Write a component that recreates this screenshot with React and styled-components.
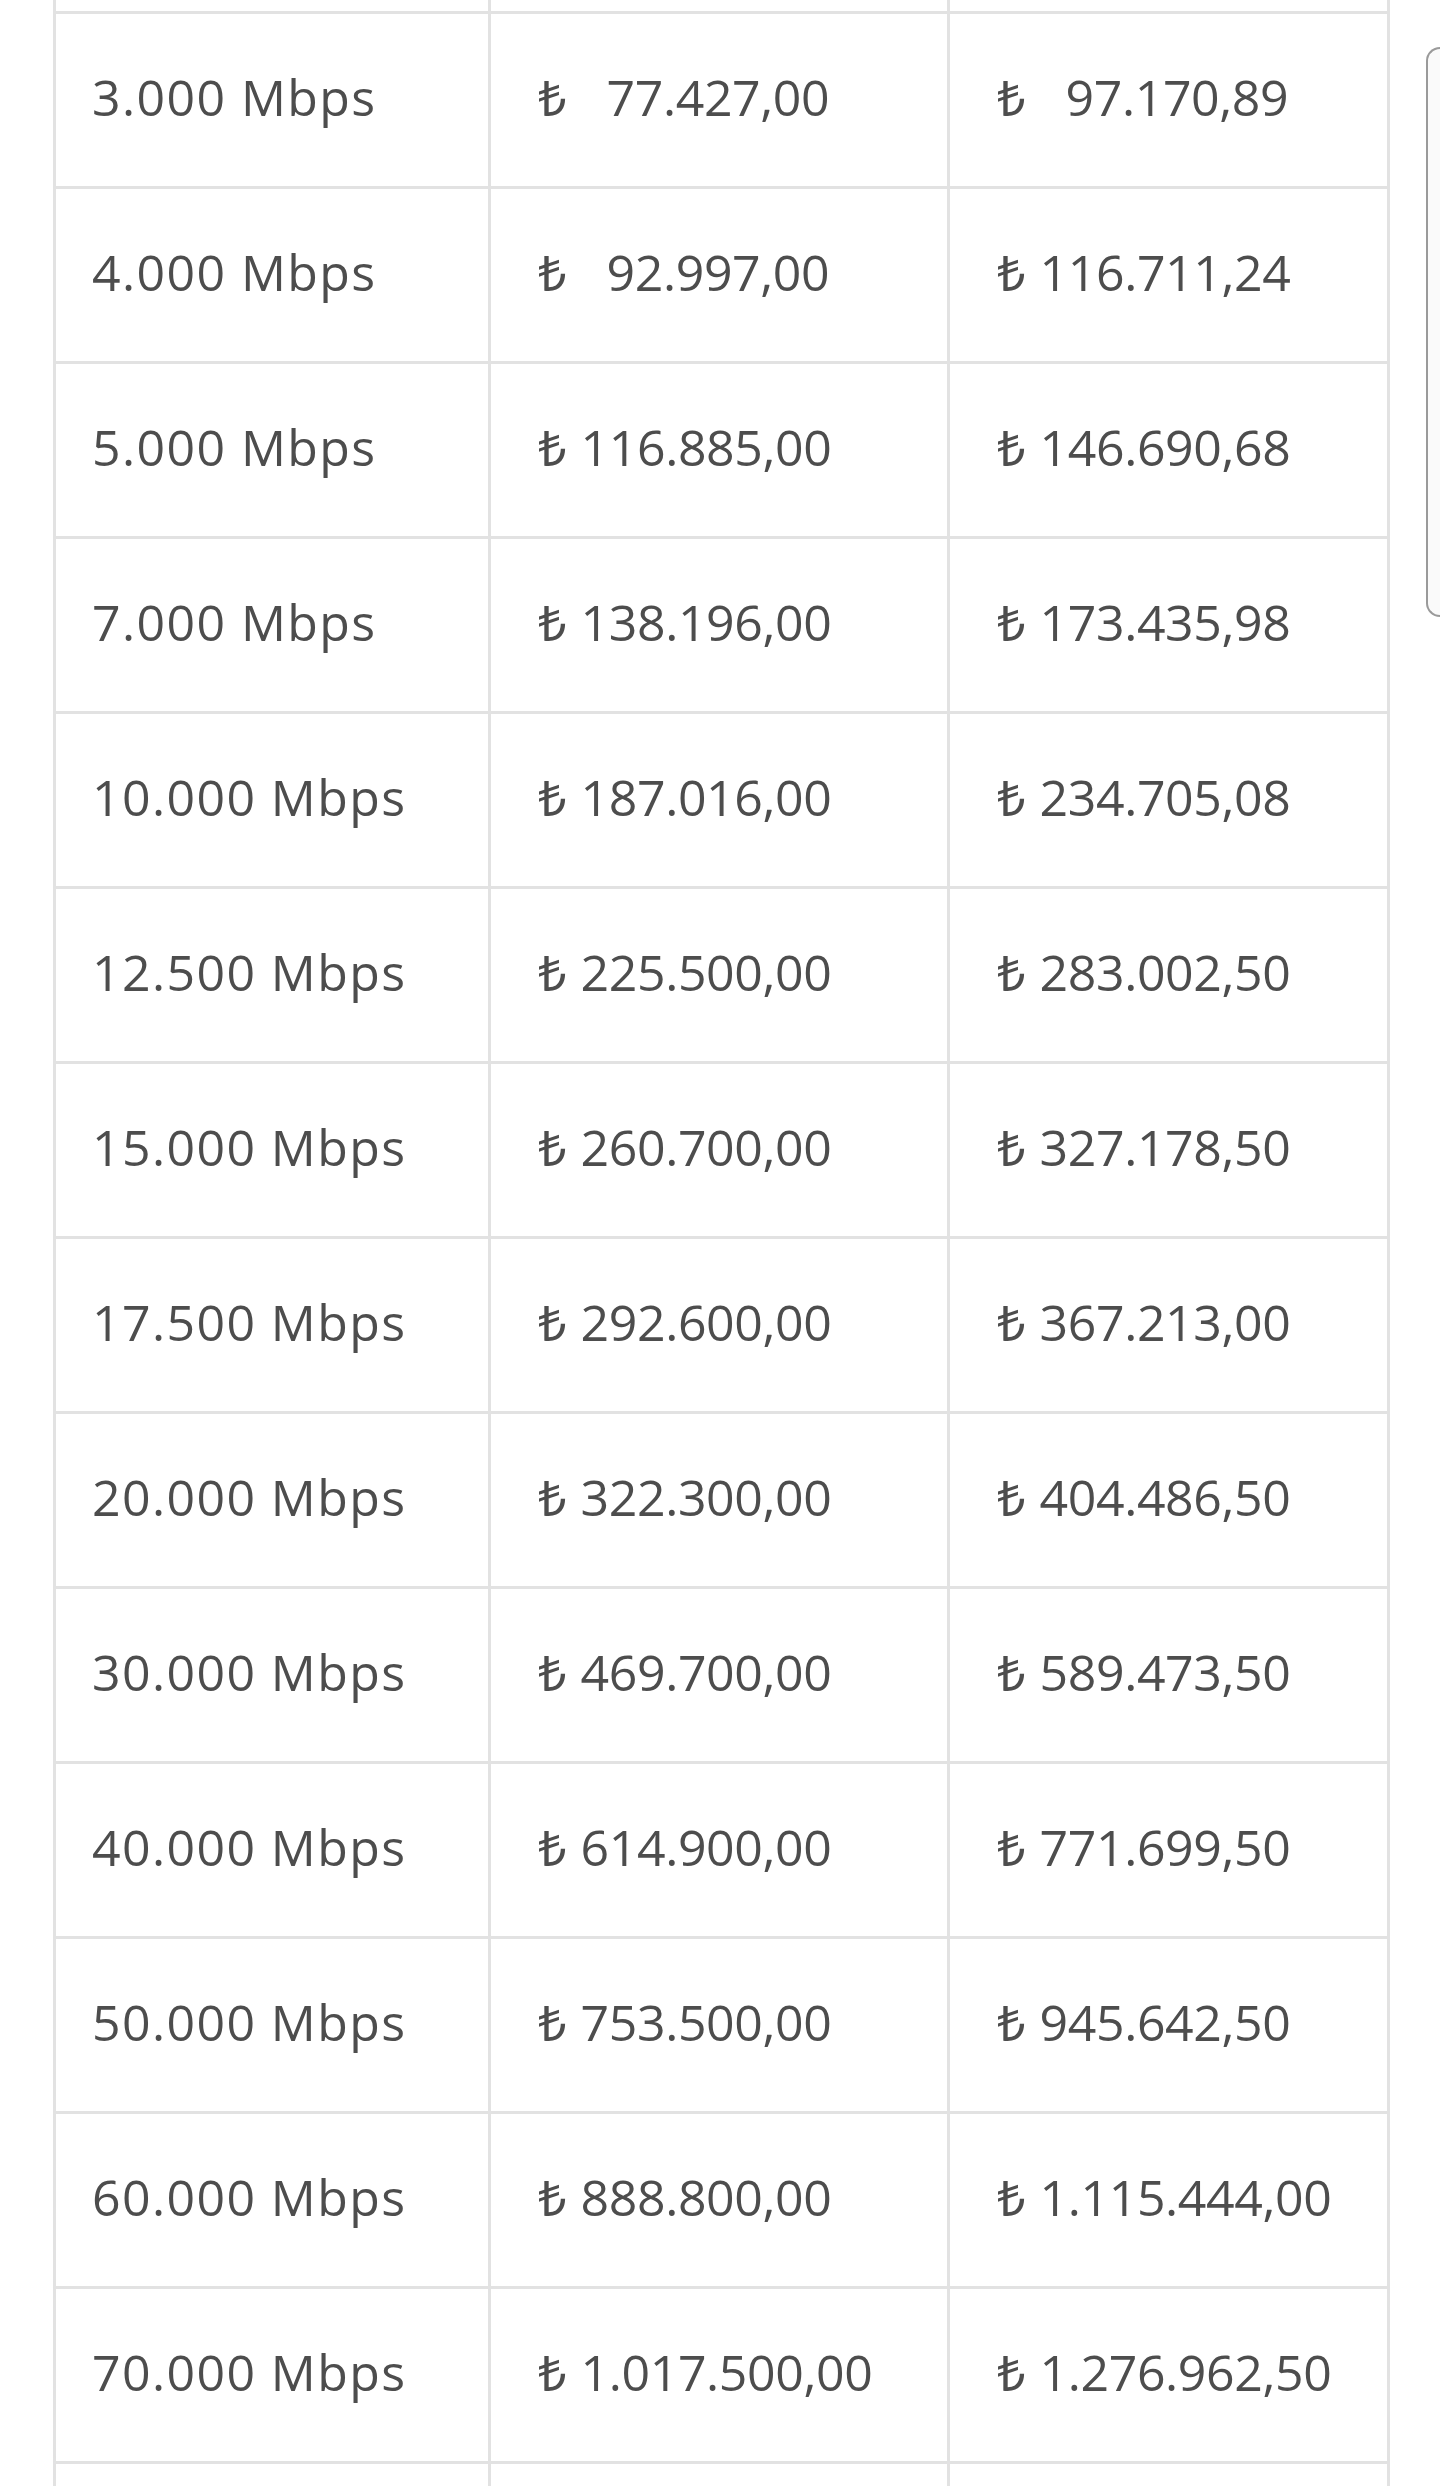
import React from "react";
import styled, { createGlobalStyle } from "styled-components";

const Global = createGlobalStyle`
  html, body { margin: 0; padding: 0; background: #fff; }
  body { overflow: hidden; }
  #root { width: 1440px; height: 2486px; overflow: hidden; }
`;

const Page = styled.div`
  display: flex;
  align-items: flex-start;
  width: 1440px;
  font-family: "Open Sans", "Noto Sans", "DejaVu Sans", sans-serif;
  color: #4d4d4d;
`;

const Grid = styled.div`
  flex: 0 0 auto;
  margin: -164px 0 0 53px;
  width: 1337px;
  box-sizing: border-box;
  display: grid;
  grid-template-columns: 432px 456px 437px;
  grid-auto-rows: 172px;
  gap: 3px;
  padding: 3px;
  background: #e2e2e2;
`;

const Cell = styled.div`
  background: #fff;
  display: flex;
  align-items: center;
  box-sizing: border-box;
  padding: 0 0 6px ${(p) => p.$pad}px;
  font-size: 50px;
  letter-spacing: ${(p) => p.$track}px;
  white-space: nowrap;
`;

const Lira = styled.span`
  letter-spacing: 0;
  margin-right: ${(p) => (p.$wide ? 40 : 14)}px;
`;

const Side = styled.div`
  flex: 0 0 auto;
  margin: 47px 0 0 36px;
  width: 120px;
  height: 566px;
  border: 2px solid #9a9a9a;
  border-right: none;
  border-radius: 14px 0 0 14px;
  background: #fafafa;
`;

const rows = [
  ["2.000 Mbps", "63.000,00", "79.065,00"],
  ["3.000 Mbps", "77.427,00", "97.170,89"],
  ["4.000 Mbps", "92.997,00", "116.711,24"],
  ["5.000 Mbps", "116.885,00", "146.690,68"],
  ["7.000 Mbps", "138.196,00", "173.435,98"],
  ["10.000 Mbps", "187.016,00", "234.705,08"],
  ["12.500 Mbps", "225.500,00", "283.002,50"],
  ["15.000 Mbps", "260.700,00", "327.178,50"],
  ["17.500 Mbps", "292.600,00", "367.213,00"],
  ["20.000 Mbps", "322.300,00", "404.486,50"],
  ["30.000 Mbps", "469.700,00", "589.473,50"],
  ["40.000 Mbps", "614.900,00", "771.699,50"],
  ["50.000 Mbps", "753.500,00", "945.642,50"],
  ["60.000 Mbps", "888.800,00", "1.115.444,00"],
  ["70.000 Mbps", "1.017.500,00", "1.276.962,50"],
  ["80.000 Mbps", "1.148.800,00", "1.441.744,00"],
];

const Price = ({ value }) => (
  <>
    <Lira $wide={value.length < 10}>₺</Lira>
    <span>{value}</span>
  </>
);

export default function App() {
  return (
    <>
      <Global />
      <Page>
        <Grid>
          {rows.map(([speed, a, b]) => (
            <React.Fragment key={speed}>
              <Cell $pad={36} $track={1.4}>{speed}</Cell>
              <Cell $pad={47} $track={-0.4}>
                <Price value={a} />
              </Cell>
              <Cell $pad={47} $track={-0.4}>
                <Price value={b} />
              </Cell>
            </React.Fragment>
          ))}
        </Grid>
        <Side />
      </Page>
    </>
  );
}
